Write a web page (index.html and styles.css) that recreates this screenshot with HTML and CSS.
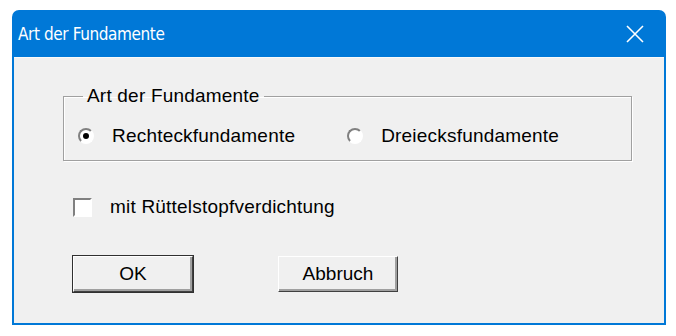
FILE: index.html
```html
<!DOCTYPE html>
<html lang="de">
<head>
  <meta charset="UTF-8" />
  <title>Art der Fundamente</title>
  <link rel="stylesheet" href="styles.css">
</head>
<body>
  <div class="window">
    <div class="titlebar">
      <span class="title">Art der Fundamente</span>
      <svg class="close" width="18" height="18" viewBox="0 0 18 18">
        <path d="M1 1 L17 17 M17 1 L1 17" stroke="#fff" stroke-width="1.6" fill="none"/>
      </svg>
    </div>

    <div class="client">
      <fieldset class="group">
        <legend>Art der Fundamente</legend>
        <div class="options">
          <label class="option"><span class="radio checked"></span>Rechteckfundamente</label>
          <label class="option"><span class="radio"></span>Dreiecksfundamente</label>
        </div>
      </fieldset>

      <label class="check-row"><span class="checkbox"></span>mit Rüttelstopfverdichtung</label>

      <div class="buttons">
        <button class="btn default">OK</button>
        <button class="btn">Abbruch</button>
      </div>
    </div>
  </div>
</body>
</html>
```

FILE: styles.css
```css
body { margin: 0; background: #fff; font-family: "Liberation Sans", Arial, sans-serif; color: #000; }

.window { margin: 10px 10px 12px 12px; background: #0078d7; border-radius: 7px 7px 0 0; padding: 0 2px 2px 2px; }

.titlebar { height: 47px; display: flex; align-items: center; justify-content: space-between; padding: 0 20px 0 4px; }
.title { font-family: "DejaVu Sans Condensed", "DejaVu Sans", sans-serif; font-stretch: condensed; font-size: 17px; letter-spacing: -0.4px; color: #fff; }
.close { display: block; }

.client { background: #f0f0f0; border-top: 1px solid #fafafa; padding: 27px 0 31px 49px; font-size: 19px; letter-spacing: 0.2px; }

.group { margin: 0; width: 553px; height: 56px; padding: 18px 0 0 14px; border: 1px solid #a0a0a0; box-shadow: 1px 1px 0 #fff, inset 1px 1px 0 #fff; }
.group legend { padding: 0 4px; margin-left: 5px; }

.options { display: flex; gap: 52px; }
.option, .check-row { display: flex; align-items: center; gap: 18px; height: 22px; }

.radio { width: 12px; height: 12px; border-radius: 50%; background: #fff; border: 2px solid; border-color: #808080 #fff #fff #808080; position: relative; }
.radio.checked::after { content: ""; position: absolute; left: 3px; top: 3px; width: 6px; height: 6px; border-radius: 50%; background: #000; }

.check-row { margin: 35px 0 0 10px; }
.checkbox { width: 15px; height: 15px; background: #fff; border: 2px solid; border-color: #808080 #fff #fff #808080; }

.buttons { display: flex; gap: 85px; margin: 38px 0 0 10px; }
.btn { width: 120px; height: 36px; background: #f0f0f0; font-family: "Liberation Sans", Arial, sans-serif; font-size: 19px; padding: 0; border: 1px solid; border-color: #fff #404040 #404040 #fff; box-shadow: inset -2px -2px 0 #a0a0a0; }
.btn.default { outline: 1px solid #303030; }
```
